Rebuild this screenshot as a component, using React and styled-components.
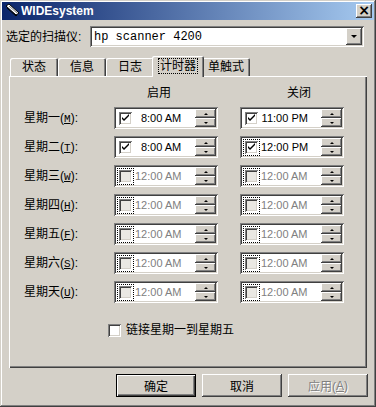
import styled, { createGlobalStyle, css } from 'styled-components'

const GlobalStyle = createGlobalStyle`
  body {
    margin: 0;
    background: #d4d0c8;
    font-family: "Liberation Sans", "Noto Sans CJK SC", sans-serif;
    font-size: 12px;
    color: #000;
  }
`

const raised = css`
  box-shadow: inset -1px -1px #404040, inset 1px 1px #fff,
    inset -2px -2px #808080, inset 2px 2px #d4d0c8;
`

const sunken = css`
  box-shadow: inset 1px 1px #808080, inset -1px -1px #fff,
    inset 2px 2px #404040, inset -2px -2px #d4d0c8;
`

const days = [
  { day: '一', key: 'M', on: { time: '8:00 AM', checked: true }, off: { time: '11:00 PM', checked: true } },
  { day: '二', key: 'T', on: { time: '8:00 AM', checked: true }, off: { time: '12:00 PM', checked: true, focus: true } },
  { day: '三', key: 'W' },
  { day: '四', key: 'H' },
  { day: '五', key: 'F' },
  { day: '六', key: 'S' },
  { day: '天', key: 'U' },
]

const tabs = ['状态', '信息', '日志', '计时器', '单触式']

function ScannerIcon() {
  return (
    <svg width="16" height="16" viewBox="0 0 16 16">
      <path d="M2 3 L5 1 L15 10 L12 12 Z" fill="#fff" stroke="#000" strokeWidth="1" />
      <path d="M3 5 L12 13 L13 12" fill="none" stroke="#000" strokeWidth="1" />
      <path d="M5 3 L13 10" stroke="#808080" strokeWidth="1" />
    </svg>
  )
}

function TimeField({ time, checked, focus, disabled }) {
  const [hm, ampm] = time.split(' ')
  const [h, m] = hm.split(':')
  return (
    <Field>
      <CheckWrap $focus={focus}>
        <Check $disabled={disabled}>{checked && <Tick />}</Check>
      </CheckWrap>
      <TimeText $disabled={disabled}>
        <Hour>{h}</Hour>:{m} {ampm}
      </TimeText>
      <Spinner>
        <SpinButton><Arrow $up $small /></SpinButton>
        <SpinButton><Arrow $small /></SpinButton>
      </Spinner>
    </Field>
  )
}

function Tick() {
  return (
    <svg width="9" height="9" viewBox="0 0 9 9">
      <path d="M1 3 L3 5 L8 0 L8 2 L3 7 L1 5 Z" fill="#000" />
    </svg>
  )
}

export default function App() {
  return (
    <>
      <GlobalStyle />
      <Window>
        <TitleBar>
          <ScannerIcon />
          <TitleText>WIDEsystem</TitleText>
          <CloseButton>×</CloseButton>
        </TitleBar>

        <ScannerRow>
          <ScannerLabel>选定的扫描仪:</ScannerLabel>
          <Combo>
            <ComboText>hp scanner 4200</ComboText>
            <DropButton><Arrow /></DropButton>
          </Combo>
        </ScannerRow>

        <TabStrip>
          {tabs.map((t) => (
            <Tab key={t} $active={t === '计时器'}>
              {t === '计时器' ? <FocusText>{t}</FocusText> : t}
            </Tab>
          ))}
        </TabStrip>

        <Panel>
          <Grid>
            <span />
            <Header $shift={33}>启用</Header>
            <span />
            <Header $shift={47}>关闭</Header>

            {days.map((d) => (
              <Row key={d.key}>
                <DayLabel>
                  星期{d.day}(<u>{d.key}</u>):
                </DayLabel>
                <TimeField {...(d.on || { time: '12:00 AM', focus: true, disabled: true })} />
                <span />
                <TimeField {...(d.off || { time: '12:00 AM', focus: true, disabled: true })} />
              </Row>
            ))}
          </Grid>

          <LinkRow>
            <Check />
            <span>链接星期一到星期五</span>
          </LinkRow>
        </Panel>

        <ButtonRow>
          <Button $default>确定</Button>
          <Button>取消</Button>
          <Button $disabled>
            应用(<u>A</u>)
          </Button>
        </ButtonRow>
      </Window>
    </>
  )
}

const Window = styled.div`
  width: 376px;
  height: 407px;
  box-sizing: border-box;
  padding: 2px;
  display: flex;
  flex-direction: column;
  background: #d4d0c8;
  box-shadow: inset -1px -1px #404040, inset 1px 1px #d4d0c8,
    inset -2px -2px #808080, inset 2px 2px #fff;
`

const TitleBar = styled.div`
  height: 18px;
  display: flex;
  align-items: center;
  padding: 0 2px 0 2px;
  background: linear-gradient(to right, #0a246a, #a6caf0);
  color: #fff;
`

const TitleText = styled.span`
  margin-left: 1px;
  font-weight: bold;
  font-size: 12px;
`

const CloseButton = styled.div`
  ${raised};
  margin-left: auto;
  width: 16px;
  height: 14px;
  background: #d4d0c8;
  color: #000;
  font: bold 14px/13px "DejaVu Sans", sans-serif;
  text-align: center;
`

const ScannerRow = styled.div`
  display: flex;
  align-items: center;
  margin-top: 6px;
  padding-left: 4px;
  height: 21px;
`

const ScannerLabel = styled.span`
  width: 84px;
  line-height: 14px;
`

const Combo = styled.div`
  ${sunken};
  width: 274px;
  height: 21px;
  box-sizing: border-box;
  padding: 2px;
  display: flex;
  align-items: center;
  background: #fff;
`

const ComboText = styled.span`
  padding-left: 2px;
  font-family: "Liberation Mono", monospace;
  font-size: 12px;
`

const DropButton = styled.div`
  ${raised};
  margin-left: auto;
  width: 16px;
  height: 17px;
  background: #d4d0c8;
  display: flex;
  align-items: center;
  justify-content: center;
`

const Arrow = styled.span`
  width: 0;
  height: 0;
  border-left: ${({ $small }) => ($small ? 2 : 3)}px solid transparent;
  border-right: ${({ $small }) => ($small ? 2 : 3)}px solid transparent;
  ${({ $up, $small }) =>
    $up
      ? `border-bottom: ${$small ? 2 : 3}px solid #000;`
      : `border-top: ${$small ? 2 : 3}px solid #000;`}
`

const TabStrip = styled.div`
  display: flex;
  align-items: flex-end;
  height: 20px;
  margin-top: 9px;
  padding-left: 8px;
`

const Tab = styled.div`
  position: relative;
  box-sizing: border-box;
  width: 48px;
  height: 18px;
  padding-top: 2px;
  text-align: center;
  line-height: 14px;
  background: #d4d0c8;
  border-radius: 2px 2px 0 0;
  box-shadow: inset 1px 1px #fff, inset -1px 0 #404040, inset -2px 0 #808080;

  ${({ $active }) =>
    $active &&
    css`
      z-index: 1;
      width: 52px;
      height: 21px;
      margin: 0 -2px -1px;
      padding-top: 3px;
    `}
`

const FocusText = styled.span`
  outline: 1px dotted #000;
  outline-offset: 0;
  padding: 0 1px;
`

const Panel = styled.div`
  box-sizing: border-box;
  width: 358px;
  height: 292px;
  margin-left: 7px;
  padding: 10px 0 0 15px;
  box-shadow: inset 1px 1px #fff, inset -1px -1px #404040,
    inset -2px -2px #808080;
`

const Grid = styled.div`
  display: grid;
  grid-template-columns: 90px 104px 22px 104px;
  grid-template-rows: 14px;
  grid-auto-rows: 22px;
  row-gap: 7px;
  align-items: center;
`

const Header = styled.span`
  padding-left: ${({ $shift }) => $shift}px;
  line-height: 14px;
  align-self: start;
`

const Row = styled.div`
  display: contents;
`

const DayLabel = styled.span`
  line-height: 14px;

  u {
    font-family: "Liberation Mono", monospace;
    font-size: 11px;
  }
`

const Field = styled.div`
  ${sunken};
  box-sizing: border-box;
  height: 22px;
  padding: 2px;
  display: flex;
  align-items: center;
  background: #fff;
`

const CheckWrap = styled.div`
  box-sizing: border-box;
  width: 17px;
  height: 17px;
  margin-left: 1px;
  display: flex;
  align-items: center;
  justify-content: center;
  border: 1px dotted ${({ $focus }) => ($focus ? '#000' : 'transparent')};
`

const Check = styled.div`
  ${sunken};
  width: 13px;
  height: 13px;
  flex: none;
  display: flex;
  align-items: center;
  justify-content: center;
  background: ${({ $disabled }) => ($disabled ? '#eae8e3' : '#fff')};
`

const TimeText = styled.span`
  margin-left: 1px;
  font-size: 11px;
  line-height: 14px;
  color: ${({ $disabled }) => ($disabled ? '#808080' : '#000')};
`

const Hour = styled.span`
  display: inline-block;
  min-width: 12px;
  text-align: right;
`

const Spinner = styled.div`
  margin-left: auto;
  width: 21px;
  height: 18px;
  display: flex;
  flex-direction: column;
`

const SpinButton = styled.div`
  ${raised};
  flex: 1;
  background: #d4d0c8;
  display: flex;
  align-items: center;
  justify-content: center;
`

const LinkRow = styled.div`
  display: flex;
  align-items: center;
  gap: 5px;
  margin: 20px 0 0 84px;
  line-height: 14px;
`

const ButtonRow = styled.div`
  display: flex;
  justify-content: flex-end;
  gap: 6px;
  margin-top: 6px;
  padding-right: 6px;
`

const Button = styled.div`
  width: 80px;
  height: 23px;
  display: flex;
  align-items: center;
  justify-content: center;
  background: #d4d0c8;
  ${raised};

  ${({ $default }) =>
    $default &&
    css`
      box-shadow: inset 1px 1px #000, inset -1px -1px #000, inset 2px 2px #fff,
        inset -2px -2px #404040, inset -3px -3px #808080;
    `}

  ${({ $disabled }) =>
    $disabled &&
    css`
      color: #808080;
      text-shadow: 1px 1px #fff;
    `}
`
